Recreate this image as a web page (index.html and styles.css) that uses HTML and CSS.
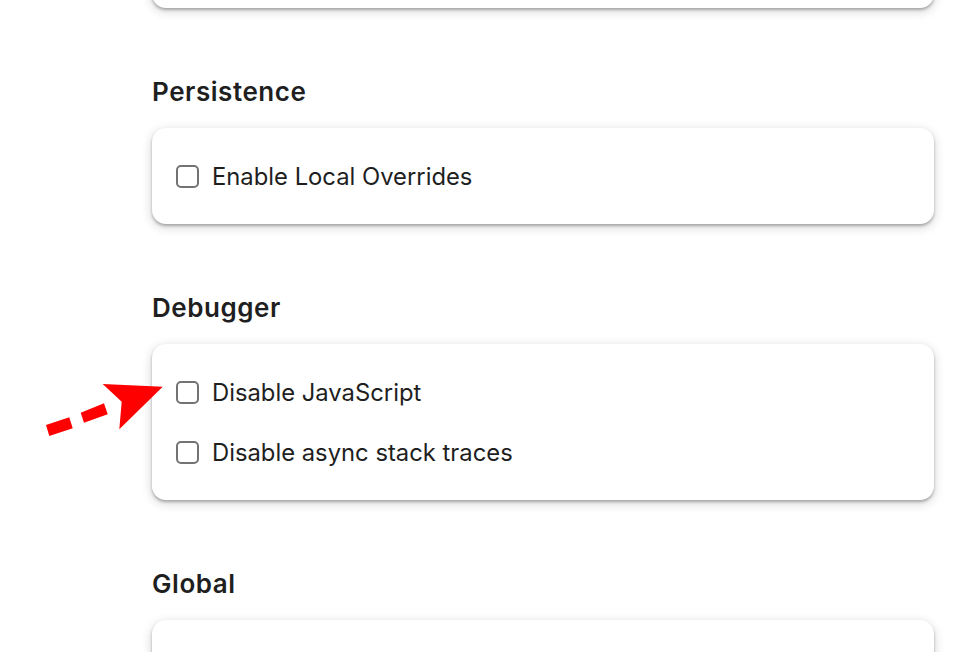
FILE: index.html
```html
<!DOCTYPE html>
<html lang="en">
<head>
<meta charset="utf-8">
<title>Settings</title>
<link rel="stylesheet" href="styles.css">
</head>
<body>
<main class="settings">
  <section class="section section-first">
    <div class="card card-top"></div>
  </section>

  <section class="section">
    <h2 class="section-title">Persistence</h2>
    <div class="card">
      <label class="row"><input type="checkbox" class="box"><span>Enable Local Overrides</span></label>
    </div>
  </section>

  <section class="section">
    <h2 class="section-title">Debugger</h2>
    <div class="card">
      <label class="row"><input type="checkbox" class="box"><span>Disable JavaScript</span></label>
      <label class="row"><input type="checkbox" class="box"><span>Disable async stack traces</span></label>
    </div>
  </section>

  <section class="section">
    <h2 class="section-title">Global</h2>
    <div class="card card-tall"></div>
  </section>
</main>

<svg class="arrow" width="962" height="652" viewBox="0 0 962 652" aria-hidden="true">
  <polygon fill="#ff0000" points="46,425 69.3,417.3 72.7,428.3 49.3,436"/>
  <polygon fill="#ff0000" points="80.7,412.7 104,403.3 107.7,414.3 84,422.7"/>
  <polygon fill="#ff0000" points="102.7,384 162.7,386.7 119.3,429.3 121.7,401.7"/>
</svg>
</body>
</html>
```

FILE: styles.css
```css
html, body {
  margin: 0;
  padding: 0;
  background: #ffffff;
  overflow: hidden;
}

body {
  font-family: Inter, "Noto Sans", "Liberation Sans", sans-serif;
  color: #1f1f1f;
  width: 962px;
  height: 652px;
  position: relative;
}

.settings {
  display: flex;
  flex-direction: column;
  gap: 68px;
  padding: 0 28px 0 152px;
  width: 962px;
  height: 652px;
  box-sizing: border-box;
  overflow: hidden;
}

.section {
  display: flex;
  flex-direction: column;
  flex: none;
}

.section-first {
  margin-top: -88px;
}

.section-title {
  margin: 0 0 20px 0;
  height: 32px;
  line-height: 32px;
  font-size: 26px;
  font-weight: 600;
  letter-spacing: 0.55px;
}

.card {
  background: #ffffff;
  border-radius: 14px;
  box-shadow: 0 2px 3px rgba(0, 0, 0, 0.28), 0 3px 10px 2px rgba(0, 0, 0, 0.12);
  padding: 18px 24px;
  display: flex;
  flex-direction: column;
}

.card-top {
  height: 60px;
}

.card-tall {
  height: 40px;
}

.row {
  height: 60px;
  display: flex;
  align-items: center;
  gap: 13px;
  font-size: 23.8px;
  font-weight: 400;
}

.box {
  appearance: none;
  -webkit-appearance: none;
  margin: 0;
  width: 23px;
  height: 23px;
  border: 2px solid #737373;
  border-radius: 5px;
  background: #ffffff;
  flex: none;
  box-sizing: border-box;
}

.arrow {
  position: absolute;
  left: 0;
  top: 0;
  pointer-events: none;
}
```
